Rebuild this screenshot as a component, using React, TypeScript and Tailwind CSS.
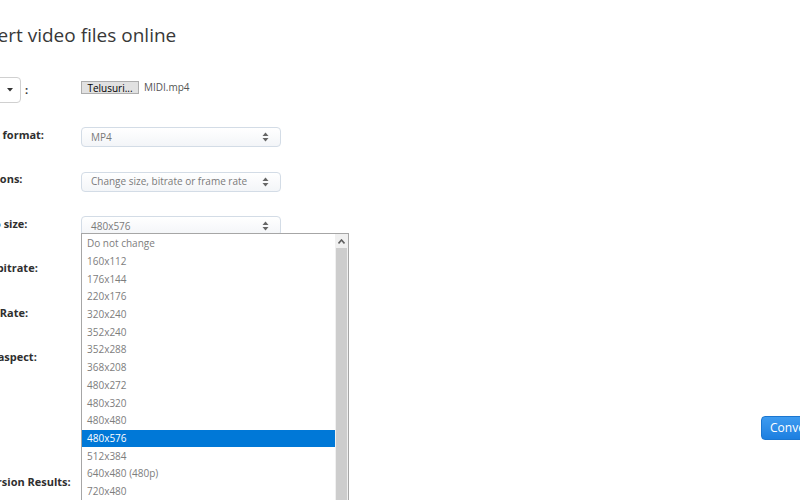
import React from "react";

const sizes = [
  "Do not change",
  "160x112",
  "176x144",
  "220x176",
  "320x240",
  "352x240",
  "352x288",
  "368x208",
  "480x272",
  "480x320",
  "480x480",
  "480x576",
  "512x384",
  "640x480 (480p)",
  "720x480",
  "720x576",
];

function Arrows() {
  return (
    <svg width="7" height="10" viewBox="0 0 7 10" className="shrink-0">
      <path d="M3.5 0.5 L6.5 4 L0.5 4 Z" fill="#666" />
      <path d="M3.5 9.5 L6.5 6 L0.5 6 Z" fill="#666" />
    </svg>
  );
}

function FakeSelect({ value }: { value: string }) {
  return (
    <div className="flex h-[20px] w-[200px] items-center justify-between rounded-[4px] border border-[#d3dce6] bg-gradient-to-b from-white to-[#f3f5f8] pl-[9px] pr-[11px] text-[10px] text-[#7a7a7a]">
      <span>{value}</span>
      <Arrows />
    </div>
  );
}

// labels are cut at the left edge of the window, so each one is nudged left
function Label({ text, shift }: { text: string; shift: number }) {
  return (
    <div className="w-[81px] shrink-0 pb-[5px]">
      <span
        className="relative block whitespace-nowrap text-[11px] font-bold text-[#2f2f2f]"
        style={{ left: shift }}
      >
        {text}
      </span>
    </div>
  );
}

export default function App() {
  return (
    <div
      className="relative h-[500px] w-[800px] overflow-hidden bg-white"
      style={{ fontFamily: '"Open Sans", "Liberation Sans", sans-serif' }}
    >
      <h1 className="ml-[-47px] pt-[21px] text-[19px] leading-[28px] text-[#383838]">
        Convert video files online
      </h1>

      <div className="mt-[17px] flex flex-col">
        {/* file row */}
        <div className="flex h-[44px] items-center">
          <div className="flex w-[81px] shrink-0 items-center pt-[4px]">
            <div className="ml-[-30px] flex h-[26px] w-[51px] items-center justify-end rounded-[4px] border border-[#d0d0d0] bg-white pr-[7px]">
              <svg width="6" height="4" viewBox="0 0 6 4">
                <path d="M0 0 L6 0 L3 3.5 Z" fill="#333" />
              </svg>
            </div>
            <span className="ml-[4px] text-[11px] font-bold text-[#333]">:</span>
          </div>
          <div className="flex items-center gap-[5px] pb-[1px]">
            <div className="flex h-[13px] w-[58px] items-center justify-center border border-[#adadad] bg-[#e1e1e1] text-[10px] leading-none text-black">
              Telusuri...
            </div>
            <span className="text-[10px] text-[#555]">MIDI.mp4</span>
          </div>
        </div>

        <div className="mt-[5px] flex h-[44.5px] items-center">
          <Label text="Output format:" shift={-40} />
          <FakeSelect value="MP4" />
        </div>
        <div className="flex h-[44.5px] items-center">
          <Label text="Options:" shift={-24} />
          <FakeSelect value="Change size, bitrate or frame rate" />
        </div>
        <div className="flex h-[44.5px] items-center">
          <Label text="Video size:" shift={-30} />
          <FakeSelect value="480x576" />
        </div>
        <div className="flex h-[44.5px] items-center">
          <Label text="Video bitrate:" shift={-37} />
          <FakeSelect value="Do not change" />
        </div>
        <div className="flex h-[44.5px] items-center">
          <Label text="Frame Rate:" shift={-38} />
          <FakeSelect value="Do not change" />
        </div>
        <div className="flex h-[44.5px] items-center">
          <Label text="Video aspect:" shift={-36} />
          <FakeSelect value="Do not change" />
        </div>

        <div className="mt-[34px] flex h-[24px] pl-[761px]">
          <div className="flex h-[24px] w-[80px] items-center rounded-[4px] border border-[#1b76d0] bg-gradient-to-b from-[#3d9bf0] to-[#1c7fe0] pl-[8px] text-[12px] text-white">
            Convert
          </div>
        </div>

        <div className="mt-[30px] flex h-[30px] items-center">
          <Label text="Conversion Results:" shift={-37} />
        </div>
      </div>

      {/* open dropdown list */}
      <div className="absolute left-[81px] top-[233px] flex h-[290px] w-[268px] border border-[#a6a6a6] bg-white">
        <div className="flex flex-1 flex-col pt-[1px]">
          {sizes.map((s) => (
            <div
              key={s}
              className={
                s === "480x576"
                  ? "flex h-[17.7px] items-center bg-[#0078d7] pl-[5px] text-[10px] text-white"
                  : "flex h-[17.7px] items-center pl-[5px] text-[10px] text-[#7d7d7d]"
              }
            >
              {s}
            </div>
          ))}
        </div>
        <div className="flex w-[13px] flex-col bg-[#f0f0f0]">
          <div className="flex h-[14px] items-center justify-center">
            <svg width="7" height="5" viewBox="0 0 7 5">
              <path d="M0.5 4.5 L3.5 1 L6.5 4.5" stroke="#606060" strokeWidth="1.6" fill="none" />
            </svg>
          </div>
          <div className="mx-[1px] flex-1 bg-[#cdcdcd]" />
        </div>
      </div>
    </div>
  );
}
